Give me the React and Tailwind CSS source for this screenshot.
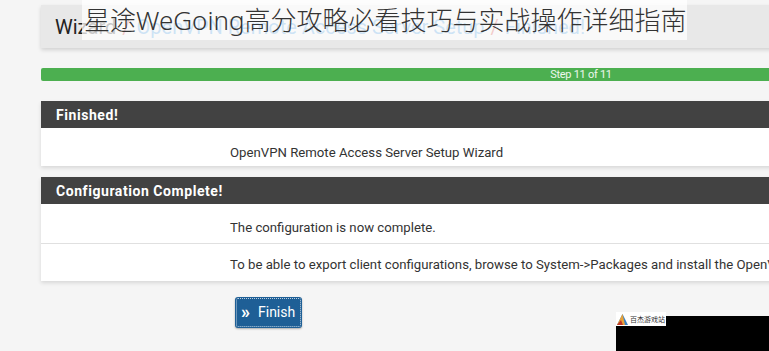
import React from 'react';

// pfSense style wizard page: breadcrumb, step bar, two panels, finish button
const font = { fontFamily: 'Roboto, "Liberation Sans", sans-serif' };

const Panel = ({ title, children }) => (
  <div className="bg-white shadow-[0_2px_4px_rgba(0,0,0,0.12)]">
    <div className="h-[27px] bg-[#424242] flex items-center pl-[15px] pt-[2px] text-[14px] font-bold tracking-[0.04em] text-white">
      {title}
    </div>
    {children}
  </div>
);

const Row = ({ text, cls, border }) => (
  <div className={`${cls} pl-[189px] text-[13.2px] leading-[15px] text-[#333] whitespace-nowrap ${border ? 'border-t border-[#e0e0e0]' : ''}`}>
    {text}
  </div>
);

export default function App() {
  return (
    <div className="relative w-[769px] h-[351px] overflow-hidden bg-[#f5f5f5]" style={font}>
      <div className="pl-[41px] w-[1121px]">
        {/* breadcrumb */}
        <div className="mt-[5px] h-[43px] bg-[#e8e8e8] shadow-[0_2px_4px_rgba(0,0,0,0.15)] flex items-center pl-[14px] text-[20px] whitespace-nowrap">
          <span className="text-[#222]">Wizard</span>
          <span className="text-[#c9302c] mx-[6px]">/</span>
          <span className="text-[#3a8fd6]">OpenVPN Remote Access Server Setup</span>
          <span className="text-[#c9302c] mx-[6px]">/</span>
          <span className="text-[#3a8fd6]">Finished!</span>
        </div>

        {/* progress */}
        <div className="mt-[20px] h-[13px] rounded-[2px] bg-[#4caf50] flex items-center justify-center text-[11px] leading-none text-white/90 tracking-tight">
          Step 11 of 11
        </div>

        <div className="mt-[20px]">
          <Panel title="Finished!">
            <Row cls="h-[38px] pt-[17px]" text="OpenVPN Remote Access Server Setup Wizard" />
          </Panel>
        </div>

        <div className="mt-[11px]">
          <Panel title="Configuration Complete!">
            <Row cls="h-[39px] pt-[16px]" text="The configuration is now complete." />
            <Row
              cls="h-[38px] pt-[13px]"
              border
              text="To be able to export client configurations, browse to System->Packages and install the OpenVPN Client Export package."
            />
          </Panel>
        </div>

        <button className="mt-[16px] ml-[194px] h-[31px] w-[67px] rounded-[3px] bg-[#1e5f96] text-white text-[14px] flex items-center pl-[6px] gap-[8px] outline-1 outline-dotted outline-white/70 -outline-offset-2 shadow-[0_1px_2px_rgba(0,0,0,0.3)]">
          <span className="text-[18px] font-bold leading-none -mt-[2px]">»</span>
          <span>Finish</span>
        </button>
      </div>

      {/* title overlay */}
      <div
        className="absolute left-[82px] top-0 w-[605px] h-[40px] bg-white/75 text-[26px] font-light leading-[40px] text-[#333] pl-[2px] whitespace-nowrap"
        style={{ fontFamily: '"Noto Sans", "Noto Sans CJK SC", sans-serif' }}
      >
        星途WeGoing高分攻略必看技巧与实战操作详细指南
      </div>

      {/* watermark */}
      <div className="absolute left-[616px] top-[316px] w-[153px] h-[35px] bg-black" />
      <div className="absolute left-[616px] top-[312px] h-[14px] w-[50px] bg-white flex items-center gap-[2px] pl-[1px]">
        <svg width="11" height="11" viewBox="0 0 11 11">
          <polygon points="5.5,0 11,11 0,11" fill="#3b82c4" />
          <polygon points="5.5,0 8,11 0,11" fill="#e8a23a" />
          <polygon points="0,11 4,6 6,11" fill="#c0392b" />
        </svg>
        <span className="text-[7px] leading-none text-[#333]" style={{ fontFamily: '"Noto Sans CJK SC", sans-serif' }}>
          百杰游戏站
        </span>
      </div>
    </div>
  );
}
